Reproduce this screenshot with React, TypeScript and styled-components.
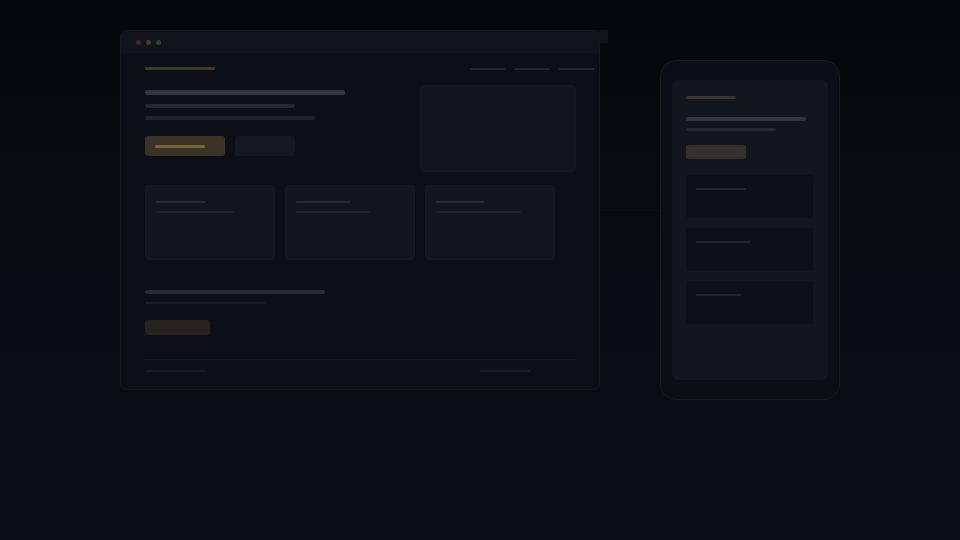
import React from 'react';
import styled, { createGlobalStyle } from 'styled-components';

const GlobalStyle = createGlobalStyle`
  html, body {
    margin: 0;
    padding: 0;
    background: #07090d;
    font-family: 'Inter', 'Liberation Sans', sans-serif;
  }
`;

const Page = styled.div`
  width: 960px;
  height: 540px;
  box-sizing: border-box;
  padding: 30px 0 0 120px;
  background: linear-gradient(180deg, #05070a 0%, #090c12 55%, #0b0e15 100%);
  display: flex;
  align-items: flex-start;
  overflow: hidden;
`;

const Browser = styled.div`
  position: relative;
  width: 480px;
  height: 360px;
  box-sizing: border-box;
  border: 1px solid #17191d;
  border-radius: 6px;
  background: #0c0f15;
  display: flex;
  flex-direction: column;

  &::after {
    content: '';
    position: absolute;
    top: -1px;
    right: -9px;
    width: 9px;
    height: 13px;
    background: #11141b;
  }
`;

const TitleBar = styled.div`
  height: 22px;
  flex-shrink: 0;
  background: #11141b;
  border-radius: 6px 6px 0 0;
  display: flex;
  align-items: center;
  gap: 5px;
  padding-left: 15px;
`;

const Dot = styled.span<{ $c: string }>`
  width: 5px;
  height: 5px;
  border-radius: 50%;
  background: ${(p) => p.$c};
`;

const BrowserBody = styled.div`
  flex: 1;
  display: flex;
  flex-direction: column;
  padding: 14px 23px 0 24px;
`;

const Header = styled.div`
  display: flex;
  justify-content: space-between;
  align-items: center;
  margin-right: -19px;
  height: 3px;
`;

const NavLinks = styled.div`
  display: flex;
  gap: 9px;
`;

const Bar = styled.div<{ $w: number; $h?: number; $c: string; $mt?: number }>`
  width: ${(p) => p.$w}px;
  height: ${(p) => p.$h ?? 2}px;
  background: ${(p) => p.$c};
  border-radius: 2px;
  margin-top: ${(p) => p.$mt ?? 0}px;
  flex-shrink: 0;
`;

const Hero = styled.div`
  display: flex;
  justify-content: space-between;
  margin-top: 15px;
`;

const HeroText = styled.div`
  display: flex;
  flex-direction: column;
  padding-top: 5px;
`;

const ButtonRow = styled.div`
  display: flex;
  gap: 10px;
  margin-top: 16px;
`;

const Button = styled.div<{ $w: number; $h: number; $bg: string }>`
  width: ${(p) => p.$w}px;
  height: ${(p) => p.$h}px;
  background: ${(p) => p.$bg};
  border-radius: 3px;
  display: flex;
  align-items: center;
  padding-left: 10px;
  box-sizing: border-box;
`;

const HeroImage = styled.div`
  width: 156px;
  height: 87px;
  background: #13161d;
  border: 1px solid #161920;
  border-radius: 4px;
  box-sizing: border-box;
`;

const Cards = styled.div`
  display: flex;
  gap: 10px;
  margin-top: 13px;
`;

const Card = styled.div`
  width: 130px;
  height: 75px;
  box-sizing: border-box;
  background: #12151c;
  border: 1px solid #161920;
  border-radius: 4px;
  padding: 15px 10px 0;
  display: flex;
  flex-direction: column;
  gap: 8px;
`;

const Section = styled.div`
  display: flex;
  flex-direction: column;
  margin-top: 30px;
`;

const Footer = styled.div`
  margin-top: 24px;
  border-top: 1px solid #161920;
  display: flex;
  justify-content: space-between;
  padding: 10px 46px 0 0;
`;

const Connector = styled.div`
  width: 60px;
  height: 1px;
  margin-top: 180px;
  background: #0e1116;
`;

const Phone = styled.div`
  width: 180px;
  height: 340px;
  margin-top: 30px;
  box-sizing: border-box;
  border: 1px solid #1a1b1e;
  border-radius: 16px;
  background: #0b0e14;
  padding: 19px 11px 19px;
`;

const Screen = styled.div`
  height: 100%;
  background: #13161d;
  border-radius: 6px;
  box-sizing: border-box;
  padding: 16px 14px 0;
  display: flex;
  flex-direction: column;
`;

const PhoneCards = styled.div`
  display: flex;
  flex-direction: column;
  gap: 10px;
  margin-top: 16px;
`;

const PhoneCard = styled.div`
  width: 127px;
  height: 43px;
  background: #0d1016;
  border-radius: 3px;
  box-sizing: border-box;
  padding: 13px 10px 0;
`;

const cardLines = [
  [50, 78],
  [55, 75],
  [48, 85],
];

const phoneLines = [50, 55, 45];

export default function App() {
  return (
    <>
      <GlobalStyle />
      <Page>
        <Browser>
          <TitleBar>
            <Dot $c="#442a2e" />
            <Dot $c="#43402b" />
            <Dot $c="#284331" />
          </TitleBar>
          <BrowserBody>
            <Header>
              <Bar $w={70} $h={3} $c="#40382c" />
              <NavLinks>
                <Bar $w={35} $c="#23262c" />
                <Bar $w={36} $c="#23262c" />
                <Bar $w={36} $c="#23262c" />
              </NavLinks>
            </Header>
            <Hero>
              <HeroText>
                <Bar $w={200} $h={5} $c="#32353d" />
                <Bar $w={150} $h={4} $c="#272a31" $mt={9} />
                <Bar $w={170} $h={4} $c="#22252c" $mt={8} />
                <ButtonRow>
                  <Button $w={80} $h={20} $bg="#3b3326">
                    <Bar $w={50} $h={3} $c="#766437" />
                  </Button>
                  <Button $w={60} $h={20} $bg="#141820" />
                </ButtonRow>
              </HeroText>
              <HeroImage />
            </Hero>
            <Cards>
              {cardLines.map(([a, b], i) => (
                <Card key={i}>
                  <Bar $w={a} $c="#292c33" />
                  <Bar $w={b} $c="#20232a" />
                </Card>
              ))}
            </Cards>
            <Section>
              <Bar $w={180} $h={4} $c="#292c33" />
              <Bar $w={120} $h={2} $c="#1c1f26" $mt={8} />
              <Button $w={65} $h={15} $bg="#27231f" style={{ marginTop: 16 }} />
            </Section>
            <Footer>
              <Bar $w={60} $c="#191c22" />
              <Bar $w={50} $c="#1b1e24" />
            </Footer>
          </BrowserBody>
        </Browser>
        <Connector />
        <Phone>
          <Screen>
            <Bar $w={50} $h={3} $c="#3a3430" />
            <Bar $w={120} $h={4} $c="#33363e" $mt={18} />
            <Bar $w={90} $h={3} $c="#24272e" $mt={7} />
            <Button $w={60} $h={14} $bg="#35322b" style={{ marginTop: 14 }} />
            <PhoneCards>
              {phoneLines.map((w, i) => (
                <PhoneCard key={i}>
                  <Bar $w={w} $c="#23262d" />
                </PhoneCard>
              ))}
            </PhoneCards>
          </Screen>
        </Phone>
      </Page>
    </>
  );
}
